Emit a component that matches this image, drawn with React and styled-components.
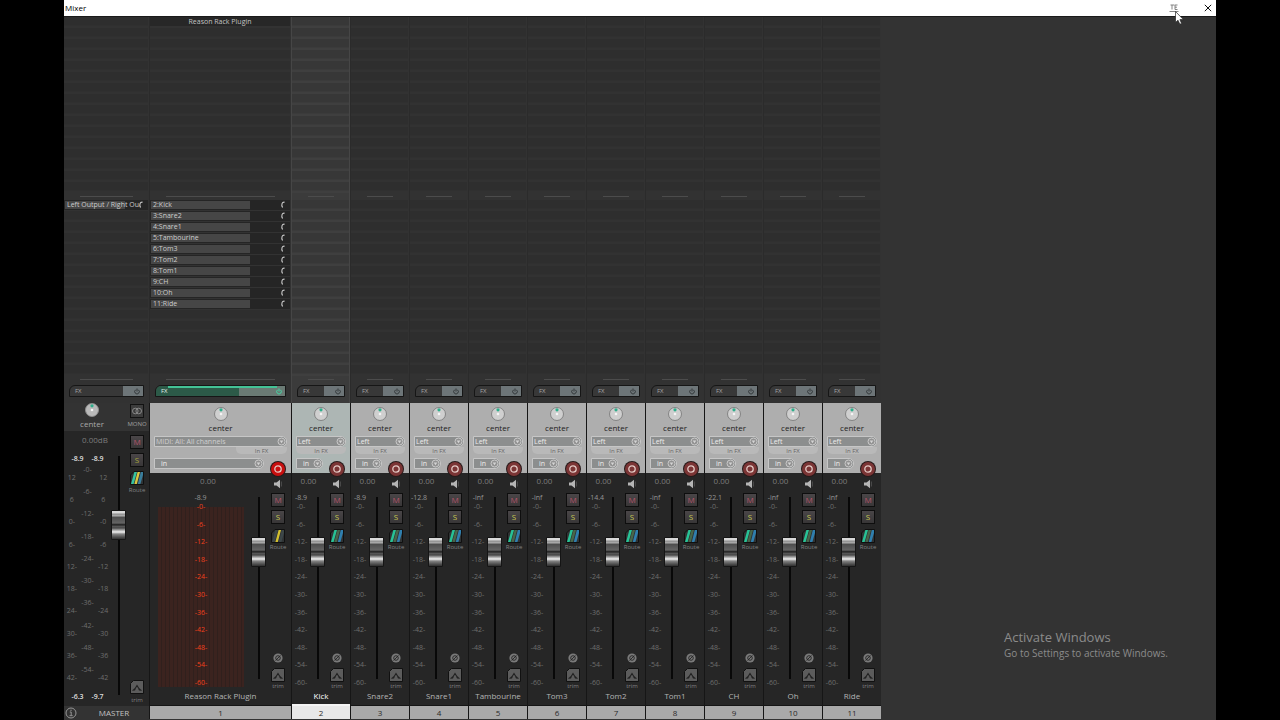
import React from "react";
import styled, { createGlobalStyle, css } from "styled-components";

const GlobalStyle = createGlobalStyle`
  * { box-sizing: border-box; }
  body { margin: 0; background: #000; font-family: "Open Sans", "Noto Sans", sans-serif; }
  button, select, input { font-family: inherit; margin: 0; padding: 0; border: 0; }
  svg { display: block; }
`;

/* ---------- window ---------- */
const Window = styled.div`
  position: relative;
  display: flex;
  flex-direction: column;
  min-height: 100vh;
  margin: 0 5%;
  background: #333;
`;
const TitleBar = styled.header`
  display: flex;
  align-items: center;
  height: 17px;
  padding: 0 2px 1px 1px;
  background: #fff;
  border-bottom: 1px solid #1a1a1a;
`;
const Title = styled.h1`
  flex: 1;
  margin: 0;
  font-size: 8px;
  font-weight: 400;
  line-height: 14px;
  color: #000;
`;
const TitleButton = styled.button`
  display: grid;
  place-items: center;
  width: 12px;
  height: 13px;
  margin-left: ${(p) => (p.$gap ? "22px" : "0")};
  background: transparent;
`;
const Cursor = styled.svg`
  position: absolute;
  top: 11px;
  right: 32px;
`;
const Body = styled.main`
  display: flex;
  flex: 1;
`;
const Desk = styled.div`
  display: flex;
  flex: 1;
  align-items: flex-end;
  justify-content: flex-end;
  padding: 0 50px 60px 0;
`;
const Notice = styled.div`
  width: 162px;
  color: #8b8b8b;
  white-space: nowrap;
`;
const NoticeTitle = styled.p`
  margin: 0;
  font-size: 13px;
  line-height: 18px;
`;
const NoticeText = styled.p`
  margin: 0;
  font-size: 10px;
  line-height: 14px;
`;

/* ---------- strip top ---------- */
const Strip = styled.section`
  flex: none;
  width: ${(p) => p.$width};
`;
const Top = styled.div`
  border-left: ${(p) => (p.$edge ? "1px" : "0")} solid ${(p) => (p.$selected ? "#464646" : "#2b2b2b")};
  background: ${(p) => (p.$selected ? "#3b3b3b" : "#323232")};
  box-shadow: ${(p) => (p.$selected ? "inset -1px 0 #464646" : "none")};
`;
const Bottom = styled.div`
  border-left: ${(p) => (p.$edge ? "1px" : "0")} solid #161616;
`;
const Slots = styled.div`
  height: 176px;
  margin-right: 1px;
  background: repeating-linear-gradient(
    to bottom,
    ${(p) => (p.$selected ? "#373737" : "#2e2e2e")} 0 8px,
    ${(p) => (p.$selected ? "#3f3f3f" : "#323232")} 9px 11px
  );
`;
const Insert = styled.button`
  display: block;
  width: 100%;
  height: 9px;
  font-size: 7px;
  line-height: 8px;
  color: #c4c4c4;
  background: #272727;
`;
const Divider = styled.hr`
  width: calc(100% - 32px);
  height: 1px;
  margin: 0 auto;
  border: 0;
  background: #4c4c4c;
`;
const DividerRow = styled.div`
  padding: 3px 0;
`;
const Send = styled.button`
  display: flex;
  align-items: center;
  width: 100%;
  height: 10px;
  margin-bottom: 1px;
  padding: 0 4px 0 1px;
  background: #252525;
`;
const SendName = styled.span`
  flex: none;
  width: ${(p) => p.$width};
  padding-left: 2px;
  font-size: 7px;
  line-height: 8px;
  text-align: left;
  white-space: nowrap;
  color: #cdcdcd;
  background: #464646;
`;
const SendKnob = styled.svg`
  margin-left: auto;
`;
const FxBar = styled.div`
  display: flex;
  height: 12px;
  margin: 0 5px;
  border: 1px solid #161616;
  border-top-left-radius: 6px;
  overflow: hidden;
  background: #383838;
`;
const FxRow = styled.div`
  padding: 2px 0 6px;
`;
const FxButton = styled.button`
  flex: 1;
  padding-left: 5px;
  text-align: left;
  font-size: 6px;
  line-height: 10px;
  color: #a6a6a6;
  background: transparent;
  ${(p) => p.$active && css`
    color: #e0f2ea;
    background: linear-gradient(#43c296, #43c296) 12px 0 / 100% 2px no-repeat #2c5a48;
  `}
`;
const FxPower = styled.button`
  display: flex;
  align-items: center;
  justify-content: flex-end;
  width: ${(p) => p.$width};
  padding-right: 3px;
  color: #2c3234;
  background: #6d7578;
  ${(p) => p.$active && css`
    color: #40e0aa;
    background: linear-gradient(#43c296, #43c296) 0 0 / 38px 2px no-repeat #6a7a74;
  `}
`;

/* ---------- input panel ---------- */
const Panel = styled.div`
  position: relative;
  display: flex;
  flex-direction: column;
  align-items: center;
  height: 70px;
  padding: 4px 4px 0;
  background: ${(p) => (p.$selected ? "#adb6b4" : "#aeaeae")};
`;
const KnobBox = styled.label`
  position: relative;
  display: block;
  width: 14px;
  height: 14px;
`;
const KnobInput = styled.input`
  position: absolute;
  inset: 0;
  width: 14px;
  height: 14px;
  opacity: 0;
`;
const KnobLabel = styled.span`
  margin: 1px 0 2px;
  font-size: 8px;
  line-height: 12px;
  color: ${(p) => (p.$light ? "#a8a8a8" : "#1c1c1c")};
`;
const Drop = styled.div`
  display: flex;
  align-items: center;
  width: 100%;
  height: 11px;
  border: 1px solid #c6c6c6;
  border-radius: 0 5px 5px 0;
  background: #8c8e8e;
`;
const DropSelect = styled.select`
  flex: 1;
  min-width: 0;
  height: 9px;
  padding-left: ${(p) => (p.$indent ? "6px" : "1px")};
  appearance: none;
  font-size: 7px;
  line-height: 8px;
  color: ${(p) => (p.$dim ? "#d0d0d0" : "#ececec")};
  background: transparent;
`;
const InFx = styled.button`
  align-self: ${(p) => (p.$wide ? "flex-end" : "stretch")};
  width: ${(p) => (p.$wide ? "51px" : "auto")};
  height: 7px;
  margin-bottom: 4px;
  border-radius: 0 0 5px 5px;
  font-size: 6px;
  line-height: 6px;
  color: #666;
  background: #b9b9b9;
`;
const InputRow = styled.div`
  align-self: stretch;
  padding-right: 23px;
`;
const Record = styled.button`
  position: absolute;
  right: 6px;
  bottom: -3px;
  display: grid;
  place-items: center;
  width: 14px;
  height: 14px;
  border-radius: 50%;
  box-shadow: 0 0 0 1px #261a1a;
  background: ${(p) => (p.$armed ? "#c80f0f" : "#7b3535")};
`;

/* ---------- fader section ---------- */
const Lower = styled.div`
  display: flex;
  height: 217px;
  padding-right: 6px;
  background: #262626;
`;
const LeftBlock = styled.div`
  flex: 1;
  min-width: 0;
  margin-right: 5px;
`;
const Volume = styled.div`
  padding-bottom: 4px;
  font-size: 8px;
  line-height: 16px;
  text-align: center;
  color: #7c7c7c;
`;
const MeterRow = styled.div`
  display: flex;
`;
const MeterColumn = styled.div`
  flex: 1;
  min-width: 0;
`;
const Peak = styled.div`
  display: flex;
  justify-content: center;
  font-size: 7px;
  line-height: 9px;
  color: #959595;
`;
const Scale = styled.ol`
  display: flex;
  flex-direction: column;
  justify-content: space-between;
  align-items: center;
  height: 185px;
  margin: 0;
  padding: 0;
  list-style: none;
  font-size: 7px;
  line-height: 9px;
  color: #6e6e6e;
  ${(p) => p.$hot && css`
    margin: 0 7px 0 8px;
    color: #f0401c;
    background:
      linear-gradient(#262626 0 5px, transparent 5px),
      repeating-linear-gradient(to right, #3b231f 0 3px, #30201d 3px 4px);
  `}
`;
const Fader = styled.input`
  width: 15px;
  height: ${(p) => p.$height};
  margin-top: ${(p) => p.$top};
  appearance: none;
  writing-mode: vertical-lr;
  direction: rtl;
  background: linear-gradient(to right, transparent 7px, #080808 7px 9px, transparent 9px);
  &::-webkit-slider-thumb {
    appearance: none;
    width: 15px;
    height: 30px;
    border: 1px solid #151515;
    border-radius: 1px;
    background: linear-gradient(
      to bottom,
      #d8d8d8 0 2px, #8c8c8c 3px, #b0b0b0 5px, #4c4c4c 6px, #646464 12px,
      #161616 14px, #5a5a5a 15px, #474747 17px, #777 18px,
      #f0f0f0 21px, #858585 23px, #505050 26px, #303030 28px
    );
  }
`;
const Buttons = styled.div`
  display: flex;
  flex-direction: column;
  align-items: center;
  width: 14px;
  padding-top: ${(p) => p.$top || "0"};
`;
const IconButton = styled.button`
  display: grid;
  place-items: center;
  flex: none;
  width: ${(p) => p.$size || "14px"};
  height: ${(p) => p.$size || "14px"};
  margin-bottom: ${(p) => p.$gap || "0"};
  background: transparent;
`;
const Toggle = styled.button`
  flex: none;
  width: 14px;
  height: 14px;
  margin-bottom: ${(p) => p.$gap};
  padding-bottom: 1px;
  border: 1px solid #0e0e0e;
  font-size: 8px;
  line-height: 10px;
  text-align: center;
  color: ${(p) => p.$color};
  background: linear-gradient(#4a4648, #383637);
`;
const Caption = styled.span`
  font-size: 6px;
  line-height: ${(p) => p.$line || "8px"};
  white-space: nowrap;
  color: ${(p) => (p.$light ? "#a0a0a0" : "#818181")};
`;
const Spacer = styled.div`
  flex: 1;
`;
const TrackName = styled.div`
  height: 16px;
  font-size: 8px;
  line-height: 12px;
  text-align: center;
  white-space: nowrap;
  color: ${(p) => (p.$selected ? "#fff" : "#b4b4b4")};
  background: #262626;
  border-bottom: ${(p) => (p.$selected ? "2px solid #f4f4f4" : "1px solid #151515")};
`;
const TrackNumber = styled.div`
  height: 13px;
  font-size: 8px;
  line-height: 13px;
  text-align: center;
  color: #2a2a2a;
  background: ${(p) => (p.$selected ? "#e8e8e8" : "#a9a9a9")};
`;

/* ---------- master ---------- */
const MasterHead = styled.div`
  display: flex;
  justify-content: space-between;
  height: 28px;
  padding-right: 5px;
  background: #333;
`;
const MasterPan = styled.div`
  display: flex;
  flex-direction: column;
  align-items: center;
  width: 56px;
`;
const MasterLower = styled.div`
  display: flex;
  height: 275px;
  padding-right: 5px;
  background: #262626;
`;
const MasterLeft = styled.div`
  width: 62px;
  margin-right: 4px;
  padding-top: 3px;
`;
const MasterDb = styled.div`
  font-size: 8px;
  line-height: 12px;
  text-align: center;
  color: #7c7c7c;
`;
const MasterRow = styled.div`
  display: flex;
  padding-top: 8px;
`;
const MasterMeters = styled.div`
  flex: 1;
`;
const Readings = styled.div`
  display: grid;
  grid-template-columns: 20px 20px;
  justify-content: center;
  font-size: 7px;
  font-weight: 600;
  line-height: 10px;
  text-align: center;
  color: #dedede;
`;
const MasterScales = styled.div`
  display: grid;
  grid-template-columns: repeat(3, 1fr);
  padding: 1px 0 10px;
`;
const MasterScale = styled(Scale)`
  height: 209px;
  margin-top: ${(p) => (p.$outer ? "8px" : "0")};
`;
const MasterFooter = styled.footer`
  display: flex;
  align-items: center;
  height: 14px;
  background: #333;
`;
const MasterTitle = styled.span`
  flex: 1;
  padding-left: 1px;
  font-size: 8px;
  line-height: 12px;
  text-align: center;
  color: #c2c2c2;
`;

/* ---------- drawings ---------- */
const ArcIcon = () => (
  <SendKnob width="6" height="8" viewBox="0 0 6 8">
    <path d="M4.6 1.2C2 .8 1 3.6 2.6 6.6" fill="none" stroke="#c9c9c9" strokeWidth="1.1" />
  </SendKnob>
);
const PowerIcon = () => (
  <svg width="6" height="7" viewBox="0 0 6 7" fill="none" stroke="currentColor">
    <path d="M1.6 1.8A2.3 2.3 0 1 0 4.4 1.8M3 .5V3.5" strokeWidth="0.9" />
  </svg>
);
const Arrow = () => (
  <svg width="9" height="9" viewBox="0 0 9 9">
    <circle cx="4.5" cy="4.5" r="3.5" fill="#929292" stroke="#cacaca" />
    <path d="M2.7 3.5H6.3L4.5 6.3Z" fill="#d4d4d4" />
  </svg>
);
const SpeakerIcon = () => (
  <svg width="10" height="10" viewBox="0 0 10 10">
    <path d="M1 3.5H3.5L7 .8V9.2L3.5 6.5H1Z" fill="#b5b5b5" />
    <path d="M8.4 2.5V7.5" stroke="#4d4d4d" />
  </svg>
);
const RouteIcon = ({ colors }) => (
  <svg width="14" height="14" viewBox="0 0 14 14">
    <path d="M4 .5H13.5V13.5H.5V4Z" fill="#303334" stroke="#101010" />
    <path d="M4.4 1H7L3.6 13H1Z" fill={colors[0]} />
    <path d="M7.6 1H10L6.8 13H4.4Z" fill={colors[1]} />
    <path d="M10.8 1H13V4L10.4 13H7.8Z" fill={colors[2]} />
  </svg>
);
const PhaseIcon = () => (
  <svg width="10" height="10" viewBox="0 0 10 10">
    <circle cx="5" cy="5" r="4.6" fill="#7a7a7a" />
    <circle cx="5" cy="5" r="2.3" fill="none" stroke="#232323" strokeWidth="0.9" />
    <path d="M2.6 7.5L7.4 2.5" stroke="#232323" strokeWidth="0.9" />
  </svg>
);
const TrimIcon = () => (
  <svg width="14" height="14" viewBox="0 0 14 14">
    <path d="M3.5 .5H13.5V13.5H.5V3.5Z" fill="#5c5c5c" stroke="#111" />
    <path d="M2.5 10.5L4.5 9.5L7 5.5L9.5 9.5L11.5 10.5" fill="none" stroke="#202020" strokeWidth="1.1" />
    <circle cx="4.5" cy="9.5" r="0.9" fill="#202020" />
    <circle cx="9.5" cy="9.5" r="0.9" fill="#202020" />
  </svg>
);
const MonoIcon = () => (
  <svg width="14" height="14" viewBox="0 0 14 14" fill="none">
    <rect x="0.5" y="0.5" width="13" height="13" fill="#3c3c3c" stroke="#121212" />
    <circle cx="5.3" cy="7" r="2.8" stroke="#8f8f8f" strokeWidth="0.9" />
    <circle cx="8.7" cy="7" r="2.8" stroke="#8f8f8f" strokeWidth="0.9" />
  </svg>
);

function Knob({ label, light }) {
  return (
    <>
      <KnobBox>
        <svg width="14" height="14" viewBox="0 0 14 14">
          <circle cx="7" cy="7" r="6.5" fill={light ? "#b9b9b9" : "#cfcfcf"} stroke={light ? "#8f8f8f" : "#7d7d7d"} strokeWidth="0.9" />
          <circle cx="7" cy="7" r="1.3" fill="#f4f4f4" />
          <circle cx="7" cy="2.8" r="1.6" fill="#2fae8b" />
        </svg>
        <KnobInput type="range" min="-100" max="100" defaultValue="0" aria-label={label} />
      </KnobBox>
      <KnobLabel $light={light}>center</KnobLabel>
    </>
  );
}

function DropDown({ value, label, indent, dim }) {
  return (
    <Drop>
      <DropSelect defaultValue={value} aria-label={label} $indent={indent} $dim={dim}>
        <option>{value}</option>
      </DropSelect>
      <Arrow />
    </Drop>
  );
}

function Fx({ active, width }) {
  return (
    <FxRow>
      <FxBar>
        <FxButton $active={active}>FX</FxButton>
        <FxPower $active={active} $width={width} aria-label="Bypass effects"><PowerIcon /></FxPower>
      </FxBar>
    </FxRow>
  );
}

const SCALE = ["-0-", "-6-", "-12-", "-18-", "-24-", "-30-", "-36-", "-42-", "-48-", "-54-", "-60-"];
const MASTER_LEFT = ["12", "6", "0-", "6-", "12-", "18-", "24-", "30-", "36-", "42-"];
const MASTER_RIGHT = ["12", "6", "-0", "-6", "-12", "-18", "-24", "-30", "-36", "-42"];
const ROUTE = ["#27c295", "#47684a", "#2f7fae"];
const ROUTE_SINGLE = ["#3c4648", "#d3c02e", "#3c4648"];
const ROUTE_MASTER = ["#35c3a0", "#d8c640", "#397d9b"];

const TRACKS = [
  {
    name: "Reason Rack Plugin", peak: "-8.9", wide: true, armed: true, insert: "Reason Rack Plugin",
    sends: ["2:Kick", "3:Snare2", "4:Snare1", "5:Tambourine", "6:Tom3", "7:Tom2", "8:Tom1", "9:CH", "10:Oh", "11:Ride"],
  },
  { name: "Kick", peak: "-8.9", selected: true },
  { name: "Snare2", peak: "-8.9" },
  { name: "Snare1", peak: "-12.8" },
  { name: "Tambourine", peak: "-inf" },
  { name: "Tom3", peak: "-inf" },
  { name: "Tom2", peak: "-14.4" },
  { name: "Tom1", peak: "-inf" },
  { name: "CH", peak: "-22.1" },
  { name: "Oh", peak: "-inf" },
  { name: "Ride", peak: "-inf" },
];

const Marks = ({ items }) => items.map((mark) => <li key={mark}>{mark}</li>);

function Master() {
  return (
    <Strip $width="85px">
      <Top>
        <Slots />
        <DividerRow><Divider /></DividerRow>
        <Slots>
          <Send><SendName $width="60px">Left Output / Right Ou</SendName><ArcIcon /></Send>
        </Slots>
        <DividerRow><Divider /></DividerRow>
        <Fx width="20px" />
      </Top>
      <Bottom>
        <MasterHead>
          <MasterPan><Knob label="Master pan" light /></MasterPan>
          <Buttons $top="1px">
            <IconButton aria-label="Mono"><MonoIcon /></IconButton>
            <Caption $line="12px" $light>MONO</Caption>
          </Buttons>
        </MasterHead>
        <MasterLower>
          <MasterLeft>
            <MasterDb>0.00dB</MasterDb>
            <MasterRow>
              <MasterMeters>
                <Readings><span>-8.9</span><span>-8.9</span></Readings>
                <MasterScales>
                  <MasterScale $outer><Marks items={MASTER_LEFT} /></MasterScale>
                  <MasterScale><Marks items={SCALE.slice(0, 10)} /></MasterScale>
                  <MasterScale $outer><Marks items={MASTER_RIGHT} /></MasterScale>
                </MasterScales>
                <Readings><span>-6.3</span><span>-9.7</span></Readings>
              </MasterMeters>
              <Fader type="range" defaultValue="74" $height="239px" $top="2px" aria-label="Master volume" />
            </MasterRow>
          </MasterLeft>
          <Buttons $top="4px">
            <Toggle $color="#b5546b" $gap="4px">M</Toggle>
            <Toggle $color="#a6a53f" $gap="4px">S</Toggle>
            <IconButton aria-label="Route"><RouteIcon colors={ROUTE_MASTER} /></IconButton>
            <Caption $line="10px">Route</Caption>
            <Spacer />
            <IconButton aria-label="Trim envelope"><TrimIcon /></IconButton>
            <Caption $line="12px">trim</Caption>
          </Buttons>
        </MasterLower>
        <MasterFooter>
          <IconButton aria-label="Information">
            <svg width="14" height="14" viewBox="0 0 14 14" fill="none" stroke="#969696">
              <circle cx="7" cy="7" r="5" />
              <path d="M5.8 6H7.2V9.5M5.5 9.7H8.7M7 3.7V5" />
            </svg>
          </IconButton>
          <MasterTitle>MASTER</MasterTitle>
        </MasterFooter>
      </Bottom>
    </Strip>
  );
}

function Track({ track, number }) {
  const { name, peak, wide, armed, selected, insert, sends = [] } = track;
  return (
    <Strip $width={wide ? "142px" : "59px"}>
      <Top $edge $selected={selected}>
        <Slots $selected={selected}>{insert && <Insert>{insert}</Insert>}</Slots>
        <DividerRow><Divider /></DividerRow>
        <Slots $selected={selected}>
          {sends.map((send) => (
            <Send key={send}><SendName $width="99px">{send}</SendName><ArcIcon /></Send>
          ))}
        </Slots>
        <DividerRow><Divider /></DividerRow>
        <Fx active={wide} width={wide ? "46px" : "20px"} />
      </Top>
      <Bottom $edge>
        <Panel $selected={selected}>
          <Knob label={`${name} pan`} />
          <DropDown value={wide ? "MIDI: All: All channels" : "Left"} label={`${name} input`} dim={wide} />
          <InFx $wide={wide}>In FX</InFx>
          <InputRow>
            <DropDown value="in" label={`${name} monitoring`} indent />
          </InputRow>
          <Record $armed={armed} aria-label={`Arm ${name}`}>
            <svg width="10" height="10" viewBox="0 0 10 10">
              <circle cx="5" cy="5" r="3.2" fill="none" stroke="#e2c9c4" strokeWidth="1.3" />
            </svg>
          </Record>
        </Panel>
        <Lower>
          <LeftBlock>
            <Volume>0.00</Volume>
            <MeterRow>
              <MeterColumn>
                <Peak>{peak}</Peak>
                <Scale $hot={wide}><Marks items={SCALE} /></Scale>
              </MeterColumn>
              <Fader type="range" defaultValue="74" $height="182px" $top="4px" aria-label={`${name} volume`} />
            </MeterRow>
          </LeftBlock>
          <Buttons $top="6px">
            <IconButton $size="10px" $gap="4px" aria-label="Monitor"><SpeakerIcon /></IconButton>
            <Toggle $color="#b5546b" $gap="3px">M</Toggle>
            <Toggle $color="#c5c653" $gap="5px">S</Toggle>
            <IconButton aria-label="Route"><RouteIcon colors={wide ? ROUTE_SINGLE : ROUTE} /></IconButton>
            <Caption>Route</Caption>
            <Spacer />
            <IconButton $size="10px" $gap="5px" aria-label="Phase"><PhaseIcon /></IconButton>
            <IconButton aria-label="Trim envelope"><TrimIcon /></IconButton>
            <Caption>trim</Caption>
          </Buttons>
        </Lower>
        <TrackName $selected={selected}>{name}</TrackName>
        <TrackNumber $selected={selected}>{number}</TrackNumber>
      </Bottom>
    </Strip>
  );
}

export default function App() {
  return (
    <>
      <GlobalStyle />
      <Window>
        <TitleBar>
          <Title>Mixer</Title>
          <TitleButton aria-label="Dock">
            <svg width="10" height="8" viewBox="0 0 10 8" fill="none" stroke="#777" strokeWidth="0.9">
              <path d="M1.5 1H5M3 1V5.5M5.5 1H8.5M6 1V5.5H8.5M6 3.2H8M.5 7.5H9.5" />
            </svg>
          </TitleButton>
          <TitleButton $gap aria-label="Close">
            <svg width="8" height="8" viewBox="0 0 8 8" stroke="#111">
              <path d="M.8 .8L7.2 7.2M7.2 .8L.8 7.2" />
            </svg>
          </TitleButton>
        </TitleBar>
        <Body>
          <Master />
          {TRACKS.map((track, i) => <Track key={track.name} track={track} number={i + 1} />)}
          <Desk>
            <Notice>
              <NoticeTitle>Activate Windows</NoticeTitle>
              <NoticeText>Go to Settings to activate Windows.</NoticeText>
            </Notice>
          </Desk>
        </Body>
        <Cursor width="9" height="14" viewBox="0 0 9 14">
          <path d="M.5 .5V11.5L3 9.2L4.8 13.2L6.6 12.4L4.9 8.6H8.4Z" fill="#fff" stroke="#222" strokeWidth="0.7" />
        </Cursor>
      </Window>
    </>
  );
}
